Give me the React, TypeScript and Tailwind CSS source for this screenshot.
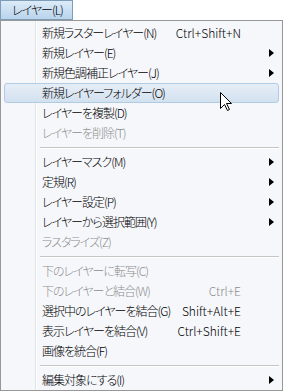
import React from "react";

type Item =
  | { type: "sep" }
  | { type: "item"; label: string; shortcut?: string; sub?: boolean; disabled?: boolean; hot?: boolean };

const items: Item[] = [
  { type: "item", label: "新規ラスターレイヤー(N)", shortcut: "Ctrl+Shift+N" },
  { type: "item", label: "新規レイヤー(E)", sub: true },
  { type: "item", label: "新規色調補正レイヤー(J)", sub: true },
  { type: "item", label: "新規レイヤーフォルダー(O)", hot: true },
  { type: "item", label: "レイヤーを複製(D)" },
  { type: "item", label: "レイヤーを削除(T)", disabled: true },
  { type: "sep" },
  { type: "item", label: "レイヤーマスク(M)", sub: true },
  { type: "item", label: "定規(R)", sub: true },
  { type: "item", label: "レイヤー設定(P)", sub: true },
  { type: "item", label: "レイヤーから選択範囲(Y)", sub: true },
  { type: "item", label: "ラスタライズ(Z)", disabled: true },
  { type: "sep" },
  { type: "item", label: "下のレイヤーに転写(C)", disabled: true },
  { type: "item", label: "下のレイヤーと結合(W)", shortcut: "Ctrl+E", disabled: true },
  { type: "item", label: "選択中のレイヤーを結合(G)", shortcut: "Shift+Alt+E" },
  { type: "item", label: "表示レイヤーを結合(V)", shortcut: "Ctrl+Shift+E" },
  { type: "item", label: "画像を統合(F)" },
  { type: "sep" },
  { type: "item", label: "編集対象にする(I)", sub: true },
];

function Arrow() {
  return (
    <svg width="5" height="8" viewBox="0 0 5 8" className="block">
      <path d="M0 0 L5 4 L0 8 Z" fill="#000" />
    </svg>
  );
}

function Cursor() {
  return (
    <svg width="13" height="20" viewBox="0 0 13 20" className="block">
      <path
        d="M0.5 0.5 L0.5 16.5 L4.5 12.5 L7.5 18.5 L9.5 17.5 L6.5 11.5 L11.5 11.5 Z"
        fill="#fff"
        stroke="#000"
        strokeWidth="1"
        strokeLinejoin="miter"
      />
    </svg>
  );
}

export default function App() {
  return (
    <div
      className="w-[283px] h-[392px] bg-white text-[12px] font-light leading-none text-black [font-feature-settings:'palt'] relative overflow-hidden"
      style={{ fontFamily: '"Noto Sans CJK JP", "Noto Sans", sans-serif' }}
    >
      <div className="flex">
        <div className="h-[20px] w-[73px] border border-[#7f9db9] bg-gradient-to-b from-[#dcebf8] to-[#b9d4ec] flex items-center pl-[11px] tracking-[-1px]">
          レイヤー(L)
        </div>
      </div>
      <div className="relative w-[283px] h-[371px] border border-[#979797] bg-[#f5f7fb] pt-[2px]">
        <div className="absolute left-[34px] top-0 bottom-0 w-[2px] border-l border-[#e2e3e3] border-r border-r-white" />
        {items.map((it, i) =>
          it.type === "sep" ? (
            <div key={i} className="relative h-[9px] ml-[39px] mr-[3px] flex flex-col justify-center">
              <div className="h-px bg-[#c5c5c5]" />
              <div className="h-px bg-white" />
            </div>
          ) : (
            <div
              key={i}
              className={
                "relative h-[20px] mx-[3px] flex items-center rounded-[3px] border " +
                (it.hot
                  ? "border-[#b0cbe4] bg-gradient-to-b from-[#e6eef8] to-[#d3e1ef]"
                  : "border-transparent") +
                (it.disabled ? " text-[#8d8d8d]" : " text-black")
              }
            >
              <span className="pl-[37px] flex-1 whitespace-nowrap tracking-[-1px]">{it.label}</span>
              {it.shortcut && <span className="whitespace-nowrap">{it.shortcut}</span>}
              <span className="w-[37px] flex justify-end pr-[4px]">{it.sub && <Arrow />}</span>
            </div>
          )
        )}
      </div>
      <div className="absolute left-[220px] top-[92px]">
        <Cursor />
      </div>
    </div>
  );
}
